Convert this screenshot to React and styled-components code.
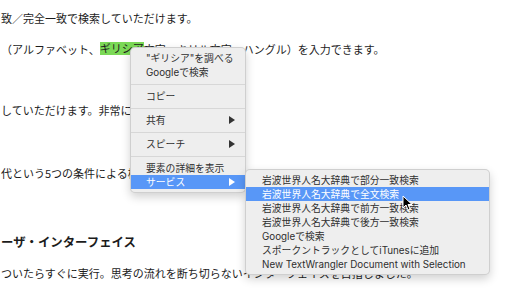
import styled, { createGlobalStyle } from "styled-components";

const GlobalStyle = createGlobalStyle`
  html, body {
    margin: 0;
    padding: 0;
    background: #fff;
    overflow: hidden;
  }
`;

const Page = styled.div`
  position: relative;
  width: 510px;
  height: 290px;
  padding-left: 1px;
  box-sizing: border-box;
  font-family: "Noto Sans CJK JP", "Liberation Sans", sans-serif;
  color: #1c1c1c;
  overflow: hidden;
`;

const Line = styled.div`
  margin-top: ${(p) => p.$gap}px;
  font-size: 11px;
  line-height: 16px;
  white-space: nowrap;
`;

const Heading = styled.div`
  margin-top: ${(p) => p.$gap}px;
  font-size: 12.4px;
  font-weight: 700;
  line-height: 18px;
  white-space: nowrap;
`;

const Mark = styled.span`
  display: inline-block;
  background: #7bd957;
  line-height: 13px;
  vertical-align: 1px;
`;

const Menu = styled.div`
  position: absolute;
  left: ${(p) => p.$x}px;
  top: ${(p) => p.$y}px;
  width: ${(p) => p.$w}px;
  padding: ${(p) => p.$pad}px 0;
  box-sizing: border-box;
  background: #eeeeee;
  border: 1px solid rgba(0, 0, 0, 0.13);
  border-radius: 5px;
  box-shadow: 0 4px 10px rgba(0, 0, 0, 0.18);
  font-family: Inter, "Noto Sans CJK JP", sans-serif;
  font-size: 9.8px;
  color: #2e2e2e;
  z-index: ${(p) => p.$z};
`;

const Item = styled.div`
  display: flex;
  align-items: center;
  justify-content: space-between;
  height: 14px;
  padding: 0 10px 0 ${(p) => p.$indent}px;
  white-space: nowrap;
  background: ${(p) => (p.$active ? "#5897f7" : "transparent")};
  color: ${(p) => (p.$active ? "#fff" : "inherit")};
`;

const Arrow = styled.span`
  width: 0;
  height: 0;
  border-top: 4px solid transparent;
  border-bottom: 4px solid transparent;
  border-left: 6px solid ${(p) => (p.$active ? "#fff" : "#333")};
`;

const Separator = styled.div`
  height: 1px;
  background: #d7d7d7;
  margin: 5px 0 4px;
`;

const Pointer = styled.svg`
  position: absolute;
  left: 402px;
  top: 195px;
  z-index: 5;
`;

function ContextMenu() {
  return (
    <Menu $x={130} $y={47} $w={116} $pad={3} $z={2}>
      <Item $indent={15}>"ギリシア"を調べる</Item>
      <Item $indent={15}>Googleで検索</Item>
      <Separator />
      <Item $indent={15}>コピー</Item>
      <Separator />
      <Item $indent={15}>
        共有
        <Arrow />
      </Item>
      <Separator />
      <Item $indent={15}>
        スピーチ
        <Arrow />
      </Item>
      <Separator />
      <Item $indent={15}>要素の詳細を表示</Item>
      <Item $indent={15} $active>
        サービス
        <Arrow $active />
      </Item>
    </Menu>
  );
}

const services = [
  "岩波世界人名大辞典で部分一致検索",
  "岩波世界人名大辞典で全文検索",
  "岩波世界人名大辞典で前方一致検索",
  "岩波世界人名大辞典で後方一致検索",
  "Googleで検索",
  "スポークントラックとしてiTunesに追加",
  "New TextWrangler Document with Selection",
];

function ServicesMenu() {
  return (
    <Menu $x={245} $y={169} $w={245} $pad={3} $z={3}>
      {services.map((s, i) => (
        <Item key={s} $indent={16} $active={i === 1}>
          {s}
        </Item>
      ))}
    </Menu>
  );
}

export default function App() {
  return (
    <>
      <GlobalStyle />
      <Page>
        <Line $gap={10}>致／完全一致で検索していただけます。</Line>
        <Line $gap={15}>
          （アルファベット、<Mark>ギリシア</Mark>文字、キリル文字、ハングル）を入力できます。
        </Line>
        <Line $gap={45}>していただけます。非常に軽快に動作します。</Line>
        <Line $gap={47}>代という5つの条件による検索が可能です。</Line>
        <Heading $gap={52}>ーザ・インターフェイス</Heading>
        <Line $gap={14}>
          ついたらすぐに実行。思考の流れを断ち切らないインターフェイスを目指しました。
        </Line>
        <ContextMenu />
        <ServicesMenu />
        <Pointer width="11" height="16" viewBox="0 0 11 16">
          <path
            d="M1 1 L1 13 L4 10 L6 15 L8 14 L6 9.5 L10 9.5 Z"
            fill="#000"
            stroke="#fff"
            strokeWidth="1"
            strokeLinejoin="round"
          />
        </Pointer>
      </Page>
    </>
  );
}
